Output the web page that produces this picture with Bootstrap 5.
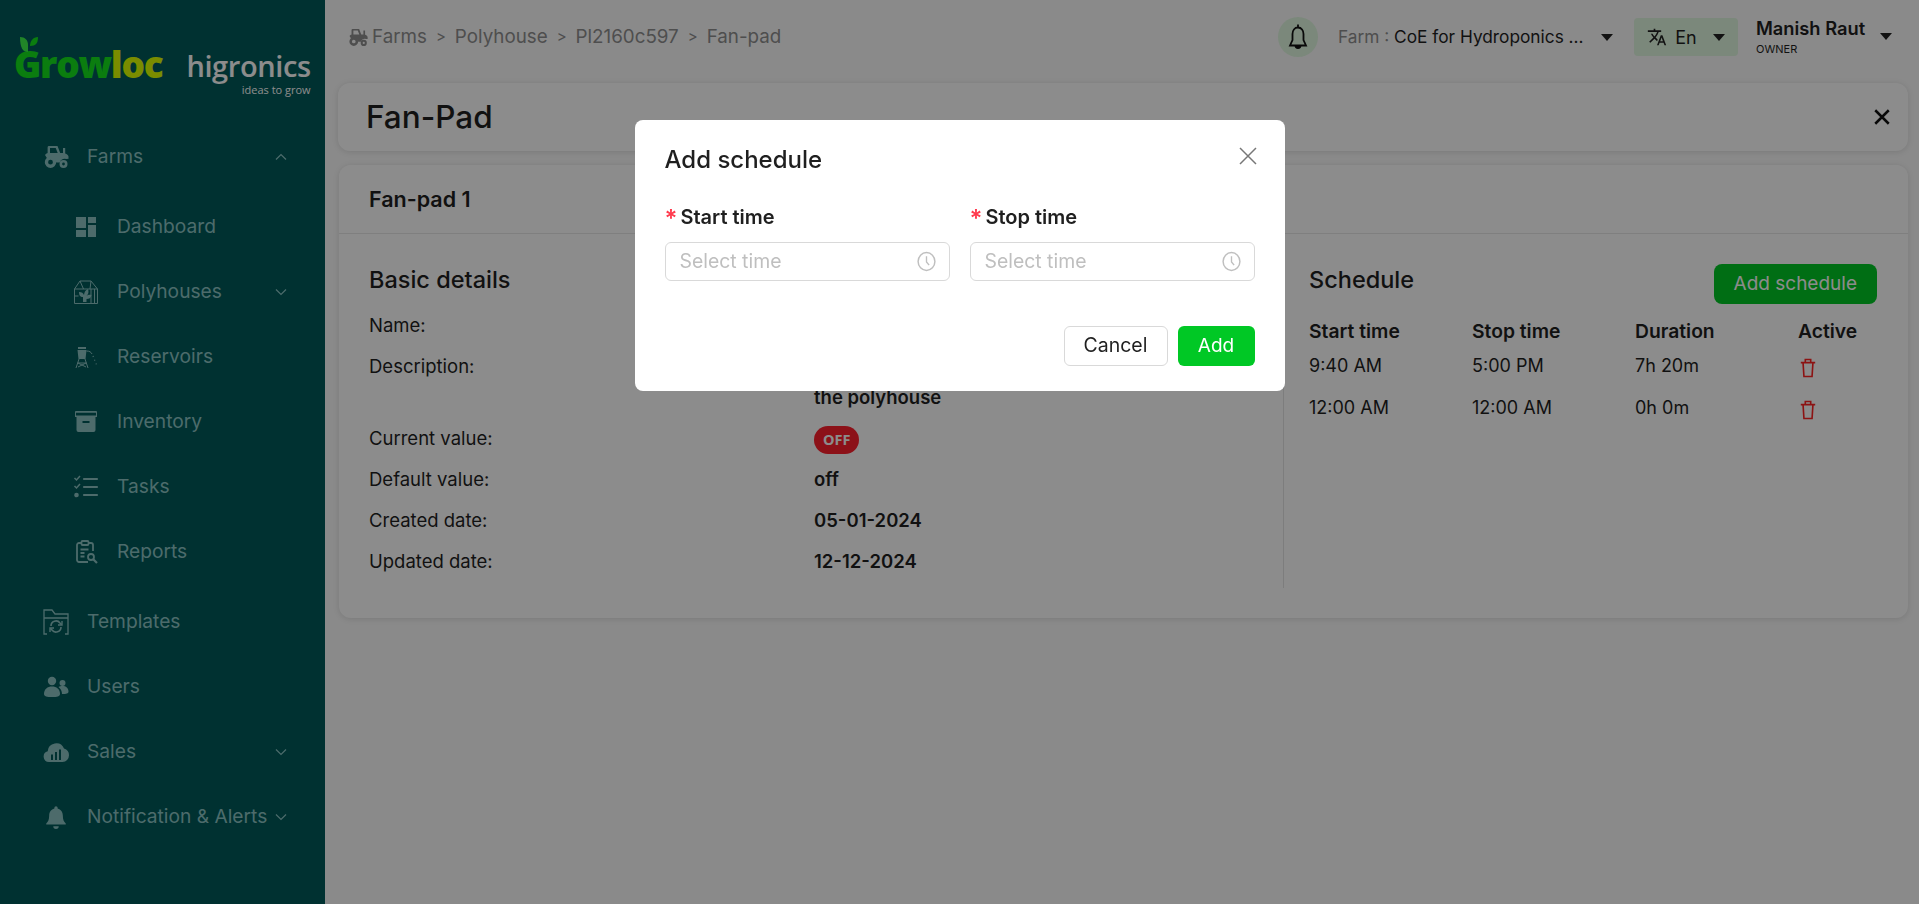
<!DOCTYPE html>
<html lang="en">
<head>
  <meta charset="UTF-8" />
  <meta name="viewport" content="width=device-width, initial-scale=1.0"/>
  <title>Fan-Pad</title>
  <link href="https://cdn.jsdelivr.net/npm/bootstrap@5.3.0/dist/css/bootstrap.min.css" rel="stylesheet" />
  <style>
    body { font-family: Inter, "Liberation Sans", sans-serif; background: #fbfbfb; color: #1f1f1f; height: 904px; overflow: hidden; }
    .side-bar { width: 325px; flex: none; height: 904px; background: #005a5a; color: #8cc4c4; }
    .logo-box { height: 124px; padding-top: 41px; padding-left: 14px; gap: 24px; }
    .logo-grow { position: relative; font-family: "Open Sans", sans-serif; font-weight: 800; font-size: 37px; line-height: 46px; letter-spacing: -1.3px; color: #14e31d; }
    .logo-grow b { color: #dfff00; font-weight: 800; }
    .logo-leaf { position: absolute; left: 5px; top: -4px; width: 20px; height: 16px; }
    .logo-higro { position: relative; font-family: "Open Sans", sans-serif; font-weight: 600; font-size: 29px; line-height: 30px; margin-top: 10px; color: #fff; letter-spacing: -.4px; }
    .logo-tag { display: block; text-align: right; font-size: 11px; font-weight: 400; line-height: 11px; letter-spacing: 0; margin-top: 3px; }
    .side-item { height: 65px; padding-left: 43px; padding-right: 38px; font-size: 19.200px; }
    .side-item svg.ic { width: 26px; height: 26px; margin-right: 18px; flex: none; }
    .side-item.sub { padding-left: 73px; }
    .sub-list { margin: 5px 0 5px; }
    .chev { width: 12px; height: 8px; flex: none; margin-left: auto; }
    .top-bar { height: 83px; padding-left: 23px; padding-right: 20px; padding-bottom: 9px; }
    .crumbs { font-size: 18.800px; color: #8f8f8f; gap: 9px; }
    .crumbs .sep { font-size: 15px; }
    .bell-dot { width: 40px; height: 40px; background: #e0f8e0; margin-right: 5px; }
    .farm-pick { font-size: 17.300px; margin-left: 15px; width: 296px; }
    .farm-pick span { color: #8f8f8f; }
    .farm-pick .tri { margin-right: 21px; }
    .tri { width: 0; height: 0; border-left: 6px solid transparent; border-right: 6px solid transparent; border-top: 7px solid #222; display: inline-block; }
    .lang-btn { width: 104px; height: 38px; background: #e0f8e0; border-radius: 4px; font-size: 18px; }
    .user-box { margin-left: 18px; width: 143px; line-height: 1; }
    .user-name { font-size: 18.300px; font-weight: 600; }
    .user-role { font-size: 11px; margin-top: 6px; }
    .user-box .tri { margin-right: 7px; }
    .title-card { height: 68px; margin: 0 11px 14px 13px; padding: 0 17px 0 28px; background: #fff; border-radius: 12px; box-shadow: 0 1px 6px rgba(0,0,0,.12); }
    .title-card h1 { font-size: 31.500px; font-weight: 500; margin: 0; }
    .main-card { height: 453px; margin: 0 11px 0 14px; border: 0; border-radius: 12px; box-shadow: 0 1px 6px rgba(0,0,0,.12); }
    .main-card .card-header { height: 69px; padding: 0 30px 0 30px; background: #fff; border-bottom: 1px solid #e8e8e8; font-size: 21.500px; font-weight: 600; border-radius: 12px 12px 0 0; }
    .left-pane { width: 945px; height: 348px; margin-top: 6px; padding: 25px 24px 0 30px; border-right: 1px solid #e4e4e4; flex: none; }
    .pane-title { font-size: 23.500px; font-weight: 500; line-height: 30px; margin: 0; }
    .left-pane .pane-title { margin-bottom: 15px; }
    .info-row { font-size: 18.500px; line-height: 31px; margin-bottom: 10px; }
    .info-row .col-6:last-child { font-weight: 600; }
    .off-pill { display: inline-flex; align-items: center; height: 28px; padding: 0 9px; border-radius: 14px; background: #ff1f2d; color: #fff; font-family: "Open Sans", sans-serif; font-size: 14.500px; font-weight: 700; vertical-align: middle; }
    .right-pane { padding: 30px 31px 0 25px; flex-grow: 1; }
    .sched-head { margin-bottom: 13px; }
    .sched-head .pane-title { margin-top: -8px; }
    .btn-add { background: #00c825; color: #fff; border: 0; height: 40px; font-size: 19px; padding: 0 20px; border-radius: 8px; }
    .sched-grid { display: grid; grid-template-columns: 163px 163px 163px auto; font-size: 18px; }
    .sched-grid > div { height: 42px; line-height: 42px; }
    .sched-grid .head { height: 28px; line-height: 28px; font-weight: 600; font-size: 19.300px; }
    .trash-ic { width: 18px; height: 22px; margin-left: 1px; margin-top: 12px; display: block; color: #ff2424; }
    .modal-backdrop { --bs-backdrop-opacity: .45; }
    .sched-dialog { width: 650px; max-width: 650px; margin: 120px auto 0; }
    .sched-dialog .modal-content { height: 271px; border: 0; border-radius: 8px; padding: 27px 30px 0; }
    .sched-title { font-size: 24px; font-weight: 500; line-height: 26px; margin: 0; }
    .close-x { position: absolute; top: 27px; right: 28px; width: 18px; height: 18px; }
    .sched-row { margin-top: 32px; }
    .sched-field { width: 285px; }
    .time-label { font-size: 20px; font-weight: 600; line-height: 24px; margin-bottom: 13px; display: flex; align-items: center; }
    .req { color: #ff3b4e; font-weight: 600; font-size: 24px; line-height: 24px; margin-right: 3px; height: 20px; }
    .time-box { height: 39px; border: 1px solid #d9d9d9; border-radius: 6px; padding: 0 13px 0 14px; color: #bfbfbf; font-size: 19.400px; }
    .time-box svg { width: 19px; height: 21px; }
    .sched-actions { margin-top: 45px; gap: 10px; }
    .btn-cancel { width: 104px; height: 40px; border: 1px solid #d9d9d9; border-radius: 6px; font-size: 19.500px; background: #fff; padding: 0; color: #1f1f1f; }
    .btn-save { width: 77px; height: 40px; border: 0; border-radius: 6px; font-size: 19px; background: #00c825; color: #fff; padding: 0; }
  </style>
</head>
<body>
  <svg width="0" height="0" class="position-absolute">
    <symbol id="tractor" viewBox="0 0 26 24">
      <path fill="currentColor" d="M6 1h8.500l2.700 7H20V3h2.200v5.400c1.800.5 3 1.600 3.300 3.200v2.200l-2 .2a6 6 0 0 0-6.900 3.400h-3.200a7.500 7.500 0 0 0-9.400-4.200L2 10c.6-1 1.500-1.700 2.600-2V2.400A1.400 1.400 0 0 1 6 1zm1 2v5h7.700l-2-5z" fill-rule="evenodd"/>
      <path fill="currentColor" fill-rule="evenodd" d="M7.500 11.500a5.700 5.700 0 1 1 0 11.400 5.700 5.700 0 0 1 0-11.400zm0 3.300a2.400 2.400 0 1 0 0 4.800 2.400 2.400 0 0 0 0-4.800zM20.500 15a4 4 0 1 1 0 8 4 4 0 0 1 0-8zm0 2.600a1.400 1.400 0 1 0 0 2.800 1.400 1.400 0 0 0 0-2.800z"/>
    </symbol>
    <symbol id="bell-fill" viewBox="0 0 24 24"><path fill="currentColor" d="M12 2a1.500 1.500 0 0 1 1.500 1.500v.7c3 .7 4.800 3.300 4.800 6.500 0 4 1 5.800 2.700 7.300v1H3v-1c1.700-1.500 2.700-3.300 2.700-7.300 0-3.200 1.800-5.800 4.800-6.500v-.7A1.500 1.500 0 0 1 12 2zM9.500 20.500h5a2.500 2.500 0 0 1-5 0z"/></symbol>
    <symbol id="trash" viewBox="0 0 20 24"><path fill="none" stroke="currentColor" stroke-width="1.800" d="M2 6h16M4.500 6l1 15.500h9l1-15.500M7 6V2.500h6V6"/></symbol>
    <symbol id="clock" viewBox="0 0 18 20"><ellipse cx="9" cy="10" rx="8" ry="8.500" fill="none" stroke="currentColor" stroke-width="1.400"/><path d="M9 5v5.500l2.500 3" fill="none" stroke="currentColor" stroke-width="1.300"/></symbol>
    <symbol id="chev-d" viewBox="0 0 12 8"><path d="M1 1.500l5 5 5-5" fill="none" stroke="currentColor" stroke-width="1.200"/></symbol>
    <symbol id="chev-u" viewBox="0 0 12 8"><path d="M1 6.500l5-5 5 5" fill="none" stroke="currentColor" stroke-width="1.200"/></symbol>
  </svg>

  <div class="d-flex">
    <aside class="side-bar">
      <div class="logo-box d-flex align-items-start">
        <div class="logo-grow">
          <svg class="logo-leaf" viewBox="0 0 20 16"><path fill="#3cf24a" d="M1 0c5 0 8 3 8 8v7C4 15 1 11 1 0z"/><path fill="#14e31d" d="M19 0c0 6-2 9-8 9 0-5 3-9 8-9z"/></svg>
          Grow<b>loc</b>
        </div>
        <div class="logo-higro">higronics<span class="logo-tag">ideas to grow</span></div>
      </div>
      <nav>
        <div class="side-item d-flex align-items-center"><svg class="ic"><use href="#tractor"/></svg>Farms<svg class="chev"><use href="#chev-u"/></svg></div>
        <div class="sub-list">
          <div class="side-item sub d-flex align-items-center">
            <svg class="ic" viewBox="0 0 26 26"><path fill="currentColor" d="M3 3h10v11H3zM15 3h8v6h-8zM15 11h8v12h-8zM3 16h10v7H3z"/></svg>Dashboard</div>
          <div class="side-item sub d-flex align-items-center">
            <svg class="ic" viewBox="0 0 26 26" fill="none" stroke="currentColor" stroke-width="1"><path d="M1.500 24.500V10L7 2h11l6.500 8v14.500zM1.500 10h23M7 2l3.500 8M18 2l-1 8M18 10v14.500M21.500 10v14.500M1.500 17h4"/><path fill="currentColor" stroke="none" d="M10 23v-5c-3 0-4-2-4-5 3 0 4 1 5 3 .3-3 1.500-5 4-6 1 3 .5 5-1.500 7 1-1 3-1.500 5-1-.5 3-2.500 4-5 4v3z"/></svg>Polyhouses<svg class="chev"><use href="#chev-d"/></svg></div>
          <div class="side-item sub d-flex align-items-center">
            <svg class="ic" viewBox="0 0 26 26" fill="none" stroke="currentColor"><path fill="currentColor" stroke="none" d="M5 3h8v2H5zM4.500 6h9l-1 9h-7z"/><path stroke-width="1" d="M6 15l-3 9M12 15l3 9M4.500 19h9M5 19l8 4M13 19l-8 4M13.500 7c3 0 4.500 1 5.500 3"/><path stroke-width="1.200" stroke-dasharray="1 3" d="M20 12l2 5 2 5"/></svg>Reservoirs</div>
          <div class="side-item sub d-flex align-items-center">
            <svg class="ic" viewBox="0 0 26 26"><path fill="currentColor" fill-rule="evenodd" d="M3 2h20a1 1 0 0 1 1 1v5h-1.500v13a2 2 0 0 1-2 2H5.500a2 2 0 0 1-2-2V8H2V3a1 1 0 0 1 1-1zm0 1.800V6.500h20V3.800zM9.500 12v2h7v-2z"/></svg>Inventory</div>
          <div class="side-item sub d-flex align-items-center">
            <svg class="ic" viewBox="0 0 26 26" fill="none" stroke="currentColor" stroke-width="2.200" stroke-linecap="round"><path d="M11 5h13M11 13h13M11 21h13"/><path stroke-width="1.500" stroke-linecap="butt" d="M1.500 4l2 2 3.500-4M1.500 12l2 2 3.500-4"/><circle cx="3.500" cy="21" r="1.200" fill="currentColor"/></svg>Tasks</div>
          <div class="side-item sub d-flex align-items-center">
            <svg class="ic" viewBox="0 0 26 26" fill="none" stroke="currentColor" stroke-width="1.800"><path d="M15 23H6a2 2 0 0 1-2-2V6a2 2 0 0 1 2-2h2M16 4h2a2 2 0 0 1 2 2v6"/><rect x="8.500" y="2" width="7" height="4" rx="1"/><path d="M7.500 10.500h8M7.500 14h4M7.500 17.500h4"/><circle cx="18" cy="18" r="3"/><path d="M20.500 20.500l3.500 3.500" stroke-width="2.200"/></svg>Reports</div>
        </div>
        <div class="side-item d-flex align-items-center">
          <svg class="ic" viewBox="0 0 26 26" fill="none" stroke="currentColor" stroke-width="1.300"><path d="M4 25H1V1h8l3 4h13v20h-3M1 9h24"/><path d="M8 17a5 5 0 0 1 9-3l1.500 1.500M18 18a5 5 0 0 1-9 3l-1.500-1.500" stroke-width="1.600"/><path d="M19 12v4h-4M7 23v-4h4" stroke-width="1.400"/></svg>Templates</div>
        <div class="side-item d-flex align-items-center">
          <svg class="ic" viewBox="0 0 26 26"><g fill="currentColor"><circle cx="9" cy="7" r="4.200"/><circle cx="19.500" cy="9" r="3"/><path d="M1 20c0-5 3.500-7.500 8-7.500s8 2.500 8 7.500c0 2.500-3 3-8 3s-8-.5-8-3z"/><path d="M15.500 13c1-.7 2.500-1 4-1 3.500 0 6 2 6 5.500 0 2-2 2.500-6.500 2.500 0-2.700-1.300-5.300-3.500-7z"/></g></svg>Users</div>
        <div class="side-item d-flex align-items-center">
          <svg class="ic" viewBox="0 0 26 26"><path fill="currentColor" fill-rule="evenodd" d="M6 23a5.500 5.500 0 0 1-1.300-10.800A8.500 8.500 0 0 1 21 9.500a7 7 0 0 1 5 6.700A6.800 6.800 0 0 1 19.500 23zM8 15.500V21h2v-5.500zM12 13v8h2v-8zM16 10.500V21h2V10.500z"/></svg>Sales<svg class="chev"><use href="#chev-d"/></svg></div>
        <div class="side-item d-flex align-items-center">
          <svg class="ic"><use href="#bell-fill"/></svg>Notification &amp; Alerts<svg class="chev"><use href="#chev-d"/></svg></div>
      </nav>
    </aside>

    <main class="flex-grow-1">
      <div class="top-bar d-flex align-items-center">
        <div class="crumbs d-flex align-items-center">
          <span class="d-flex align-items-center gap-1"><svg width="20" height="19"><use href="#tractor"/></svg>Farms</span>
          <span class="sep">&gt;</span><span>Polyhouse</span>
          <span class="sep">&gt;</span><span>Pl2160c597</span>
          <span class="sep">&gt;</span><span>Fan-pad</span>
        </div>
        <div class="bell-dot rounded-circle d-flex align-items-center justify-content-center ms-auto">
          <svg width="20" height="28" viewBox="0 0 20 28" fill="none" stroke="#111" stroke-width="1.800"><path d="M10 1.500v3M10 4.500c-3.500 0-5.500 3-5.500 6.500v6L2 22.500h16L15.500 17v-6c0-3.500-2-6.500-5.500-6.500z"/><path d="M7.500 22.500a2.500 2.500 0 0 0 5 0" fill="#111"/></svg>
        </div>
        <div class="farm-pick d-flex align-items-center justify-content-between"><div class="text-nowrap"><span>Farm :</span> CoE for Hydroponics ...</div><i class="tri"></i></div>
        <div class="lang-btn d-flex align-items-center justify-content-center gap-2">
          <svg width="20" height="20" viewBox="0 0 24 24"><path fill="#222" d="M12.870 15.070l-2.540-2.510.03-.03c1.740-1.940 2.980-4.170 3.710-6.530H17V4h-7V2H8v2H1v1.990h11.170C11.500 7.920 10.440 9.750 9 11.350 8.070 10.320 7.300 9.190 6.690 8h-2c.73 1.630 1.730 3.170 2.980 4.560l-5.090 5.020L4 19l5-5 3.110 3.110.76-2.040zM18.500 10h-2L12 22h2l1.120-3h4.750L21 22h2l-4.500-12zm-2.620 7l1.620-4.330L19.120 17h-3.240z"/></svg>
          En <i class="tri ms-2"></i>
        </div>
        <div class="user-box d-flex align-items-center justify-content-between">
          <div><div class="user-name text-nowrap">Manish Raut</div><div class="user-role">OWNER</div></div>
          <i class="tri"></i>
        </div>
      </div>

      <div class="title-card d-flex align-items-center justify-content-between">
        <h1>Fan-Pad</h1>
        <svg width="18" height="18" viewBox="0 0 16 16" stroke="#111" stroke-width="2.200"><path d="M2 2l12 12M14 2L2 14"/></svg>
      </div>

      <div class="card main-card">
        <div class="card-header d-flex align-items-center">Fan-pad 1</div>
        <div class="d-flex">
          <div class="left-pane">
            <h2 class="pane-title">Basic details</h2>
            <div class="row g-0 info-row"><div class="col-6">Name:</div><div class="col-6">Fan-pad 1</div></div>
            <div class="row g-0 info-row"><div class="col-6">Description:</div><div class="col-6">Controls air inside<br>the polyhouse</div></div>
            <div class="row g-0 info-row"><div class="col-6">Current value:</div><div class="col-6"><span class="off-pill">OFF</span></div></div>
            <div class="row g-0 info-row"><div class="col-6">Default value:</div><div class="col-6">off</div></div>
            <div class="row g-0 info-row"><div class="col-6">Created date:</div><div class="col-6">05-01-2024</div></div>
            <div class="row g-0 info-row"><div class="col-6">Updated date:</div><div class="col-6">12-12-2024</div></div>
          </div>
          <div class="right-pane">
            <div class="sched-head d-flex justify-content-between align-items-center">
              <h2 class="pane-title">Schedule</h2>
              <button class="btn btn-add" type="button">Add schedule</button>
            </div>
            <div class="sched-grid">
              <div class="head">Start time</div><div class="head">Stop time</div><div class="head">Duration</div><div class="head">Active</div>
              <div>9:40 AM</div><div>5:00 PM</div><div>7h 20m</div><div><svg class="trash-ic"><use href="#trash"/></svg></div>
              <div>12:00 AM</div><div>12:00 AM</div><div>0h 0m</div><div><svg class="trash-ic"><use href="#trash"/></svg></div>
            </div>
          </div>
        </div>
      </div>
    </main>
  </div>

  <div class="modal-backdrop show"></div>
  <div class="modal d-block" tabindex="-1">
    <div class="modal-dialog sched-dialog">
      <div class="modal-content">
        <h5 class="sched-title">Add schedule</h5>
        <svg class="close-x" viewBox="0 0 18 18" stroke="#777" stroke-width="1.500"><path d="M1 1l16 16M17 1L1 17"/></svg>
        <div class="sched-row d-flex justify-content-between">
          <div class="sched-field">
            <div class="time-label"><span class="req">*</span>Start time</div>
            <div class="time-box d-flex align-items-center justify-content-between"><span>Select time</span><svg><use href="#clock"/></svg></div>
          </div>
          <div class="sched-field">
            <div class="time-label"><span class="req">*</span>Stop time</div>
            <div class="time-box d-flex align-items-center justify-content-between"><span>Select time</span><svg><use href="#clock"/></svg></div>
          </div>
        </div>
        <div class="d-flex justify-content-end sched-actions">
          <button class="btn-cancel" type="button">Cancel</button>
          <button class="btn-save" type="button">Add</button>
        </div>
      </div>
    </div>
  </div>

  <script src="https://cdn.jsdelivr.net/npm/bootstrap@5.3.0/dist/js/bootstrap.bundle.min.js"></script>
</body>
</html>
